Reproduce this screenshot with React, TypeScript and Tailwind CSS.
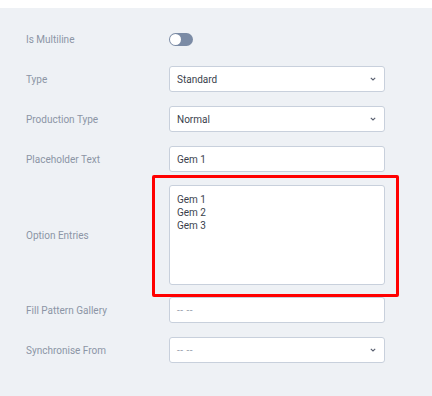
import React from 'react';

const labelCls = 'w-[143px] shrink-0 text-[10px] text-[#8c95a5]';
const boxCls =
  'h-[26px] w-[216px] rounded-[3px] border border-[#c8d0dc] bg-white px-[7px] text-[10px] text-[#3a3f4d] flex items-center';

function Chevron() {
  return (
    <svg width="6" height="4" viewBox="0 0 6 4" className="ml-auto mr-[1px]">
      <path d="M0.8 0.8 L3 3 L5.2 0.8" fill="none" stroke="#5a6070" strokeWidth="1.1" />
    </svg>
  );
}

function Row({ label, children, className = '' }: { label: string; children: React.ReactNode; className?: string }) {
  return (
    <div className={'flex items-center ' + className}>
      <div className={labelCls}>{label}</div>
      {children}
    </div>
  );
}

export default function App() {
  return (
    <div className="min-h-[396px] w-[432px] bg-white pt-[8px]" style={{ fontFamily: 'Roboto, "Liberation Sans", sans-serif' }}>
      <div className="min-h-[388px] bg-[#eef1f5] pl-[26px] pt-[18px]">
        <div className="flex flex-col gap-[14px]">
          <Row label="Is Multiline">
            <div className="flex h-[26px] items-center">
              <div className="flex h-[13px] w-[24px] items-center rounded-full bg-[#7b8ba5] px-[1px]">
                <div className="h-[11px] w-[11px] rounded-full bg-white" />
              </div>
            </div>
          </Row>
          <Row label="Type">
            <div className={boxCls}>
              <span>Standard</span>
              <Chevron />
            </div>
          </Row>
          <Row label="Production Type">
            <div className={boxCls}>
              <span>Normal</span>
              <Chevron />
            </div>
          </Row>
          <Row label="Placeholder Text">
            <div className={boxCls}>
              <span>Gem 1</span>
            </div>
          </Row>
          <Row label="Option Entries" className="-mt-[1px] -mb-[2px]">
            <div className="relative">
              <div className="h-[100px] w-[216px] rounded-[3px] border border-[#c8d0dc] bg-white px-[7px] pt-[7px] text-[10px] leading-[13px] text-[#3a3f4d]">
                <div>Gem 1</div>
                <div>Gem 2</div>
                <div>Gem 3</div>
              </div>
              <div className="pointer-events-none absolute -bottom-[12px] -left-[17px] -right-[14px] -top-[10px] rounded-[2px] border-[3px] border-[#ff0000]" />
            </div>
          </Row>
          <Row label="Fill Pattern Gallery">
            <div className={boxCls}>
              <span className="tracking-[0.5px] text-[#9aa1ad]">-- --</span>
            </div>
          </Row>
          <Row label="Synchronise From">
            <div className={boxCls}>
              <span className="tracking-[0.5px] text-[#9aa1ad]">-- --</span>
              <Chevron />
            </div>
          </Row>
        </div>
      </div>
    </div>
  );
}
